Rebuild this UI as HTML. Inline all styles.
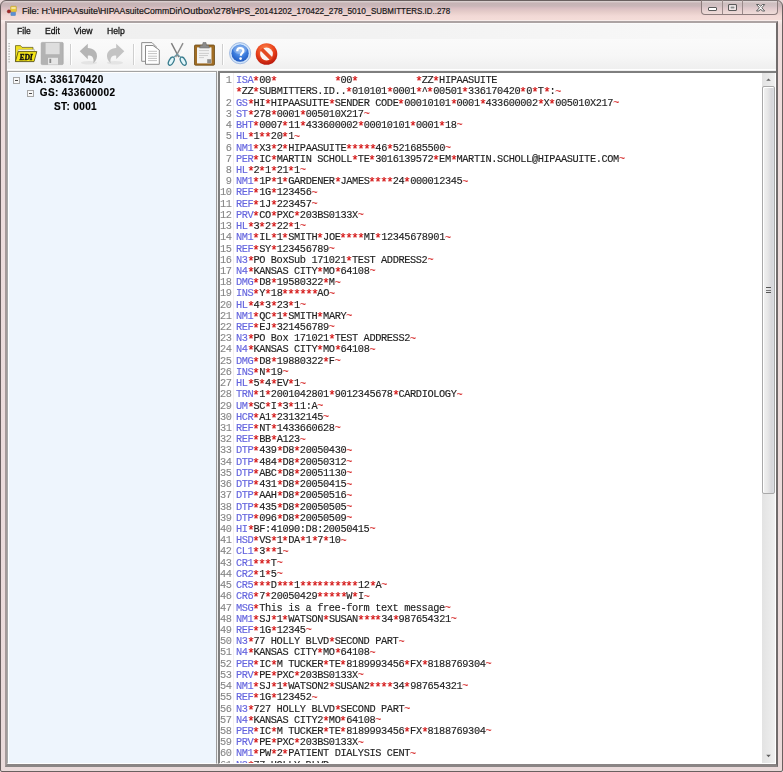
<!DOCTYPE html>
<html><head><meta charset="utf-8">
<style>
*{margin:0;padding:0;box-sizing:border-box}
html,body{width:783px;height:772px;overflow:hidden;background:#e8d8d8}
body{position:relative;font-family:"Liberation Sans",sans-serif}
.abs{position:absolute}
#win{left:0;top:0;width:783px;height:772px;background:linear-gradient(#dcd2d2 0,#d6caca 1px,#c6b3b5 2px,#c9b6b8 5px,#d9bec2 7px,#e6cdca 11px,#f2d9d6 15px,#f4dcd8 18.5px,#f8ecea 19.5px,#efdedd 24px,#ecdcdc 200px,#eadada);border:1px solid #6a6060;border-radius:6px 6px 2px 2px}
#title{left:21.5px;top:4.7px;font-size:9.6px;color:#151515;-webkit-text-stroke:0.2px;white-space:pre}
#title span{position:absolute;top:0;transform-origin:0 0}
#caps{left:701px;top:0px;width:77px;height:15px;border:1px solid #8c7c7c;border-top:none;border-radius:0 0 4px 4px;background:linear-gradient(rgba(255,255,255,0.12),rgba(255,255,255,0.2))}
#client{left:5px;top:21px;width:773px;height:746px;background:#f0f0f0;border-left:2px solid #a49a9a;border-top:2px solid #aca3a3;border-right:2px solid #716c6c;border-bottom:3px solid #8a8585}
#menu{will-change:transform;left:7px;top:23px;width:769px;height:16px;background:linear-gradient(90deg,#efefef,#f1f1f1 40%,#f9f9f9);border-top:1px solid #fbfbfb}
.mi{position:absolute;top:1px;font-size:9.6px;color:#111;-webkit-text-stroke:0.3px;transform-origin:0 0;transform:scaleX(0.9)}
#tool{left:7px;top:39px;width:769px;height:31px;background:linear-gradient(#fafafa,#f7f7f7 55%,#efefef);border-bottom:1px solid #fff}
#tree{will-change:transform;left:7px;top:71px;width:210px;height:693px;background:#eef5fd;border-top:1px solid #a3a3a3;border-right:1px solid #9a9a9a;border-bottom:1px solid #fff;border-left:1px solid #a6a9a9;box-shadow:inset 1px 1px 0 #fff}
.tn{position:absolute;font-size:10px;font-weight:bold;color:#000;-webkit-text-stroke:0.15px;white-space:pre;letter-spacing:0.38px}
.bx{position:absolute;width:7px;height:7px;border:1px solid #a6a6a6;background:#f8f8f8}
.bx::after{content:"";position:absolute;left:1px;top:2px;width:3px;height:1px;background:#4a4a4a}
#ed{left:218px;top:71px;width:558px;height:693px;background:#fff;border-left:2px solid #7f7f7f;border-top:2px solid #7f7f7f;border-bottom:1px solid #fff}
#sb{left:762px;top:73px;width:13px;height:690px;background:linear-gradient(90deg,#e3e3e3,#eaeaea 60%,#f0f0f0)}
#sbw{left:775px;top:73px;width:1px;height:691px;background:#fff}
#thumb{left:762px;top:86px;width:13px;height:408px;border:1px solid #a9a9a9;border-radius:2px;background:linear-gradient(90deg,#f2f2f2,#e8e8e8 40%,#d6d6da 80%,#dcdfe3);box-shadow:inset 1px 1px 0 #fff}
#grip{left:766px;top:287px;width:5px;height:6px;border-top:1px solid #555;border-bottom:1px solid #555}
#grip::after{content:"";position:absolute;left:0;top:1.5px;width:5px;height:1px;background:#777}
#code{left:220px;top:73px;width:542px;height:690px;overflow:hidden;will-change:transform}
.row{position:absolute;left:0;width:542px;height:12px;white-space:pre;font-family:"Liberation Mono",monospace;font-size:10.3px;letter-spacing:-0.38px;color:#222;-webkit-text-stroke:0.14px}
.ln{position:absolute;right:530.5px;color:#858585;text-align:right;-webkit-text-stroke:0.1px}
.tx{position:absolute;left:16px}
.s{color:#6464de}
.d{color:#d83838;position:relative;top:0.4px}
.a{color:#d00000;display:inline-block;transform:translateY(1.2px) scale(1.22)}
#gut{left:233px;top:73px;width:1px;height:690px;background:#f3eeee}
</style></head><body>
<div id="win" class="abs"></div>
<svg class="abs" style="left:6px;top:5px" width="13" height="13" viewBox="6 5 13 13">
 <rect x="10.6" y="6.2" width="5.8" height="5.6" rx="0.8" fill="#e8c838" stroke="#b89828" stroke-width="0.5"/>
 <rect x="11.4" y="7" width="4.2" height="2" fill="#f6e49a"/>
 <rect x="10.9" y="12.3" width="4.6" height="3.3" fill="#5a90d4" stroke="#4a78b0" stroke-width="0.4"/>
 <circle cx="8.9" cy="11.4" r="1.7" fill="#a02828" stroke="#802020" stroke-width="0.4"/>
</svg>
<div id="title" class="abs">
 <span style="left:0px;transform:scaleX(0.933)">File: H:\HIPAAsuite\</span>
 <span style="left:78.4px;transform:scaleX(0.904)">HIPAAsuiteCommDir\</span>
 <span style="left:161.2px;transform:scaleX(0.968)">Outbox\278\</span>
 <span style="left:211.6px;transform:scaleX(0.868)">HPS_20141202_170422_278_5010_</span>
 <span style="left:349.3px;transform:scaleX(0.83)">SUBMITTERS.ID..278</span>
</div>
<div id="caps" class="abs"></div>
<svg class="abs" style="left:701px;top:0" width="78" height="16" viewBox="0 0 78 16">
 <line x1="21.5" y1="0" x2="21.5" y2="14" stroke="#9a8a8a" stroke-width="1"/>
 <line x1="41.5" y1="0" x2="41.5" y2="14" stroke="#9a8a8a" stroke-width="1"/>
 <rect x="7.5" y="7.5" width="8" height="3" rx="0.5" fill="#fff" stroke="#5a5a5a" stroke-width="1"/>
 <rect x="27.5" y="4.5" width="8" height="6" rx="0.5" fill="none" stroke="#5a5a5a" stroke-width="1"/>
 <rect x="29" y="6" width="5" height="3" fill="#8a8a8a" stroke="#fff" stroke-width="1"/>
  <path d="M55.5,4.5 L57.9,4.5 L59.6,6.4 L61.3,4.5 L63.7,4.5 L60.8,7.75 L63.7,11 L61.3,11 L59.6,9.1 L57.9,11 L55.5,11 L58.4,7.75 Z" fill="#fff" stroke="#5e5e5e" stroke-width="1" stroke-linejoin="round"/>
</svg>
<div id="client" class="abs"></div>
<div id="menu" class="abs">
 <span class="mi" style="left:10.3px">File</span>
 <span class="mi" style="left:37.6px">Edit</span>
 <span class="mi" style="left:66.6px">View</span>
 <span class="mi" style="left:99.6px">Help</span>
</div>
<div id="tool" class="abs"></div>
<svg class="abs" style="left:0;top:38px" width="290" height="32" viewBox="0 38 290 32">
 <defs>
  <radialGradient id="hb" cx="0.5" cy="0.35" r="0.7"><stop offset="0" stop-color="#8cb8f0"/><stop offset="0.5" stop-color="#3d7fe0"/><stop offset="1" stop-color="#1c52b8"/></radialGradient>
  <radialGradient id="rb" cx="0.45" cy="0.3" r="0.75"><stop offset="0" stop-color="#ff8a50"/><stop offset="0.55" stop-color="#e8401a"/><stop offset="1" stop-color="#b01008"/></radialGradient>
 </defs>
 <!-- grip -->
 <g fill="#a0a0a0"><rect x="8.5" y="43" width="1.2" height="1.2"/><rect x="8.5" y="45.6" width="1.2" height="1.2"/><rect x="8.5" y="48.2" width="1.2" height="1.2"/><rect x="8.5" y="50.8" width="1.2" height="1.2"/><rect x="8.5" y="53.4" width="1.2" height="1.2"/><rect x="8.5" y="56" width="1.2" height="1.2"/><rect x="8.5" y="58.6" width="1.2" height="1.2"/><rect x="8.5" y="61.2" width="1.2" height="1.2"/></g>
 <!-- folder EDI -->
 <path d="M15.5,61.5 L15.5,45.6 L20.5,45.6 L22,47.4 L33,47.4 L33,52 Z" fill="#f0e020" stroke="#6a6420" stroke-width="0.8"/>
 <path d="M17.5,51.8 L18.5,49.6 L34.5,49.6 L34,51.8 Z" fill="#fafaf0" stroke="#9a9a80" stroke-width="0.5"/>
 <path d="M18.2,51.6 L36.8,51.6 L34,61.6 L15.4,61.6 Z" fill="#f8e818" stroke="#5a5418" stroke-width="0.9"/>
 <text x="19.4" y="59.5" font-family="Liberation Serif" font-weight="bold" font-style="italic" font-size="8.3" fill="#111" stroke="#111" stroke-width="0.45" textLength="13.4" lengthAdjust="spacingAndGlyphs">EDI</text>
 <!-- save -->
 <rect x="41.2" y="42.4" width="22" height="22.2" rx="1" fill="#b3b3b3" stroke="#a0a0a0" stroke-width="0.6"/>
 <rect x="45.6" y="43" width="14" height="11.2" fill="#dedede"/>
 <rect x="48" y="57.8" width="10" height="6.8" fill="#e6e6e6"/>
 <rect x="49.4" y="58.8" width="1.8" height="4.2" fill="#8a8a8a"/>
 <!-- sep -->
 <rect x="70" y="44" width="1" height="21" fill="#cfcfcf"/><rect x="71" y="44" width="1" height="21" fill="#fff"/>
 <!-- undo -->
 <ellipse cx="89" cy="62.8" rx="8" ry="1.8" fill="#e4e4e4"/>
 <path d="M79.7,51.2 L87.8,43.8 L87.8,48 C93.5,48 97.2,51.6 97,56.5 C96.8,59.5 95,62 93.2,63.2 C94.2,60 93.2,55.2 88.6,55.6 L87.8,55.8 L87.8,59.2 Z" fill="#b5b5b5"/>
 <!-- redo -->
 <ellipse cx="115" cy="62.8" rx="8" ry="1.8" fill="#e4e4e4"/>
 <path d="M124.3,51.2 L116.2,43.8 L116.2,48 C110.5,48 106.8,51.6 107,56.5 C107.2,59.5 109,62 110.8,63.2 C109.8,60 110.8,55.2 115.4,55.6 L116.2,55.8 L116.2,59.2 Z" fill="#c3c3c3"/>
 <!-- sep -->
 <rect x="133" y="44" width="1" height="21" fill="#cfcfcf"/><rect x="134" y="44" width="1" height="21" fill="#fff"/>
 <!-- copy -->
 <path d="M141.7,42.6 L152,42.6 L156,46.6 L156,61.3 L141.7,61.3 Z" fill="#fafafa" stroke="#8e8e8e" stroke-width="1"/>
 <path d="M145.5,45.5 L153,45.5 L159.3,50 L159.3,64.3 L145.5,64.3 Z" fill="#fff" stroke="#8a8a8a" stroke-width="1"/>
 <g stroke="#b4b4b4" stroke-width="0.8"><line x1="148" y1="51.3" x2="157" y2="51.3"/><line x1="148" y1="53.6" x2="157" y2="53.6"/><line x1="148" y1="56.2" x2="157" y2="56.2"/><line x1="148" y1="58.4" x2="157" y2="58.4"/><line x1="148" y1="60.6" x2="157" y2="60.6"/></g>
 <!-- scissors -->
 <path d="M171.4,43.2 L178.8,57.2" stroke="#7c7c7c" stroke-width="1.4"/>
 <path d="M183,43.2 L175.6,57.2" stroke="#8c8c8c" stroke-width="1.4"/>
 <path d="M177.2,54.2 L173.2,57.6 M177.2,54.2 L181.2,57.6" stroke="#6a9aa8" stroke-width="1.1"/>
 <ellipse cx="171.3" cy="61.2" rx="2.3" ry="4.5" transform="rotate(28 171.3 61.2)" fill="#e2f6fb" stroke="#3a7d8e" stroke-width="1.3"/>
 <ellipse cx="183.2" cy="61.2" rx="2.3" ry="4.5" transform="rotate(-28 183.2 61.2)" fill="#e2f6fb" stroke="#3a7d8e" stroke-width="1.3"/>
 <!-- clipboard -->
 <rect x="194.5" y="45" width="20" height="20.2" rx="1" fill="#a06c22" stroke="#6a4a18" stroke-width="0.8"/>
 <rect x="197" y="47.4" width="14.5" height="16" fill="#f2f2f2"/>
 <path d="M199.5,48 L200.5,45.2 L202.5,45.2 L203,42.5 L206,42.5 L206.5,45.2 L208.5,45.2 L209.5,48 Z" fill="#8a8a8a" stroke="#666" stroke-width="0.5"/>
 <g stroke="#c4c4c4" stroke-width="0.8"><line x1="199" y1="50.6" x2="209" y2="50.6"/><line x1="199" y1="53.4" x2="209" y2="53.4"/><line x1="199" y1="55.5" x2="208" y2="55.5"/><line x1="199" y1="57.6" x2="204" y2="57.6"/></g>
 <rect x="207.2" y="59.2" width="4" height="4" fill="#8d8d8d"/>
 <!-- sep -->
 <rect x="222" y="44" width="1" height="21" fill="#cfcfcf"/><rect x="223" y="44" width="1" height="21" fill="#fff"/>
 <!-- help -->
 <circle cx="240.1" cy="53.2" r="10.6" fill="#d0e4fa" stroke="#8aa8d8" stroke-width="0.7"/>
 <circle cx="240.1" cy="53.2" r="8.6" fill="url(#hb)"/>
 <ellipse cx="240.1" cy="49.6" rx="7" ry="4.6" fill="#fff" opacity="0.22"/>
 <path d="M237.2,51.2 C237.2,48.8 238.6,48 240,48 C242.2,48 243.4,49.4 243.4,50.8 C243.4,53 240.8,53.2 240.8,55.8" fill="none" stroke="#fff" stroke-width="2.2"/>
 <circle cx="240.6" cy="58.6" r="1.3" fill="#fff"/>
 <!-- stop -->
 <circle cx="266.5" cy="54" r="10.8" fill="url(#rb)"/>
 <circle cx="266.5" cy="54" r="6.4" fill="#fbf4f2"/>
 <path d="M261.5,49 L271.5,59" stroke="#e34a22" stroke-width="3.8"/>
</svg>
<div id="tree" class="abs">
 <div class="bx" style="left:5px;top:5px"></div>
 <span class="tn" style="left:17.5px;top:2px">ISA: 336170420</span>
 <div class="bx" style="left:19px;top:18px"></div>
 <span class="tn" style="left:31.8px;top:15px">GS: 433600002</span>
 <span class="tn" style="left:46px;top:28.5px">ST: 0001</span>
</div>
<div id="ed" class="abs"></div>
<div id="gut" class="abs"></div>
<div id="sb" class="abs"></div>
<div id="sbw" class="abs"></div>
<div id="thumb" class="abs"></div>
<div id="grip" class="abs"></div>
<svg class="abs" style="left:762px;top:73px" width="13" height="14"><path d="M4.2,7.8 L6.5,5.4 L8.8,7.8 Z" fill="#606060"/></svg>
<svg class="abs" style="left:762px;top:749px" width="13" height="14"><path d="M4.2,5.8 L6.5,8.2 L8.8,5.8 Z" fill="#606060"/></svg>
<div id="code" class="abs">
<div class="row" style="top:1.20px"><span class="ln">1</span><span class="tx"><span class="s">ISA</span><span class="a">*</span>00<span class="a">*</span>          <span class="a">*</span>00<span class="a">*</span>          <span class="a">*</span>ZZ<span class="a">*</span>HIPAASUITE     </span></div>
<div class="row" style="top:12.42px"><span class="ln"></span><span class="tx"><span class="a">*</span>ZZ<span class="a">*</span>SUBMITTERS.ID..<span class="a">*</span>010101<span class="a">*</span>0001<span class="a">*</span>^<span class="a">*</span>00501<span class="a">*</span>336170420<span class="a">*</span>0<span class="a">*</span>T<span class="a">*</span>:<span class="d">~</span></span></div>
<div class="row" style="top:23.64px"><span class="ln">2</span><span class="tx"><span class="s">GS</span><span class="a">*</span>HI<span class="a">*</span>HIPAASUITE<span class="a">*</span>SENDER CODE<span class="a">*</span>00010101<span class="a">*</span>0001<span class="a">*</span>433600002<span class="a">*</span>X<span class="a">*</span>005010X217<span class="d">~</span></span></div>
<div class="row" style="top:34.86px"><span class="ln">3</span><span class="tx"><span class="s">ST</span><span class="a">*</span>278<span class="a">*</span>0001<span class="a">*</span>005010X217<span class="d">~</span></span></div>
<div class="row" style="top:46.08px"><span class="ln">4</span><span class="tx"><span class="s">BHT</span><span class="a">*</span>0007<span class="a">*</span>11<span class="a">*</span>433600002<span class="a">*</span>00010101<span class="a">*</span>0001<span class="a">*</span>18<span class="d">~</span></span></div>
<div class="row" style="top:57.30px"><span class="ln">5</span><span class="tx"><span class="s">HL</span><span class="a">*</span>1<span class="a">*</span><span class="a">*</span>20<span class="a">*</span>1<span class="d">~</span></span></div>
<div class="row" style="top:68.52px"><span class="ln">6</span><span class="tx"><span class="s">NM1</span><span class="a">*</span>X3<span class="a">*</span>2<span class="a">*</span>HIPAASUITE<span class="a">*</span><span class="a">*</span><span class="a">*</span><span class="a">*</span><span class="a">*</span>46<span class="a">*</span>521685500<span class="d">~</span></span></div>
<div class="row" style="top:79.74px"><span class="ln">7</span><span class="tx"><span class="s">PER</span><span class="a">*</span>IC<span class="a">*</span>MARTIN SCHOLL<span class="a">*</span>TE<span class="a">*</span>3016139572<span class="a">*</span>EM<span class="a">*</span>MARTIN.SCHOLL@HIPAASUITE.COM<span class="d">~</span></span></div>
<div class="row" style="top:90.96px"><span class="ln">8</span><span class="tx"><span class="s">HL</span><span class="a">*</span>2<span class="a">*</span>1<span class="a">*</span>21<span class="a">*</span>1<span class="d">~</span></span></div>
<div class="row" style="top:102.18px"><span class="ln">9</span><span class="tx"><span class="s">NM1</span><span class="a">*</span>1P<span class="a">*</span>1<span class="a">*</span>GARDENER<span class="a">*</span>JAMES<span class="a">*</span><span class="a">*</span><span class="a">*</span><span class="a">*</span>24<span class="a">*</span>000012345<span class="d">~</span></span></div>
<div class="row" style="top:113.40px"><span class="ln">10</span><span class="tx"><span class="s">REF</span><span class="a">*</span>1G<span class="a">*</span>123456<span class="d">~</span></span></div>
<div class="row" style="top:124.62px"><span class="ln">11</span><span class="tx"><span class="s">REF</span><span class="a">*</span>1J<span class="a">*</span>223457<span class="d">~</span></span></div>
<div class="row" style="top:135.84px"><span class="ln">12</span><span class="tx"><span class="s">PRV</span><span class="a">*</span>CO<span class="a">*</span>PXC<span class="a">*</span>203BS0133X<span class="d">~</span></span></div>
<div class="row" style="top:147.06px"><span class="ln">13</span><span class="tx"><span class="s">HL</span><span class="a">*</span>3<span class="a">*</span>2<span class="a">*</span>22<span class="a">*</span>1<span class="d">~</span></span></div>
<div class="row" style="top:158.28px"><span class="ln">14</span><span class="tx"><span class="s">NM1</span><span class="a">*</span>IL<span class="a">*</span>1<span class="a">*</span>SMITH<span class="a">*</span>JOE<span class="a">*</span><span class="a">*</span><span class="a">*</span><span class="a">*</span>MI<span class="a">*</span>12345678901<span class="d">~</span></span></div>
<div class="row" style="top:169.50px"><span class="ln">15</span><span class="tx"><span class="s">REF</span><span class="a">*</span>SY<span class="a">*</span>123456789<span class="d">~</span></span></div>
<div class="row" style="top:180.72px"><span class="ln">16</span><span class="tx"><span class="s">N3</span><span class="a">*</span>PO BoxSub 171021<span class="a">*</span>TEST ADDRESS2<span class="d">~</span></span></div>
<div class="row" style="top:191.94px"><span class="ln">17</span><span class="tx"><span class="s">N4</span><span class="a">*</span>KANSAS CITY<span class="a">*</span>MO<span class="a">*</span>64108<span class="d">~</span></span></div>
<div class="row" style="top:203.16px"><span class="ln">18</span><span class="tx"><span class="s">DMG</span><span class="a">*</span>D8<span class="a">*</span>19580322<span class="a">*</span>M<span class="d">~</span></span></div>
<div class="row" style="top:214.38px"><span class="ln">19</span><span class="tx"><span class="s">INS</span><span class="a">*</span>Y<span class="a">*</span>18<span class="a">*</span><span class="a">*</span><span class="a">*</span><span class="a">*</span><span class="a">*</span><span class="a">*</span>AO<span class="d">~</span></span></div>
<div class="row" style="top:225.60px"><span class="ln">20</span><span class="tx"><span class="s">HL</span><span class="a">*</span>4<span class="a">*</span>3<span class="a">*</span>23<span class="a">*</span>1<span class="d">~</span></span></div>
<div class="row" style="top:236.82px"><span class="ln">21</span><span class="tx"><span class="s">NM1</span><span class="a">*</span>QC<span class="a">*</span>1<span class="a">*</span>SMITH<span class="a">*</span>MARY<span class="d">~</span></span></div>
<div class="row" style="top:248.04px"><span class="ln">22</span><span class="tx"><span class="s">REF</span><span class="a">*</span>EJ<span class="a">*</span>321456789<span class="d">~</span></span></div>
<div class="row" style="top:259.26px"><span class="ln">23</span><span class="tx"><span class="s">N3</span><span class="a">*</span>PO Box 171021<span class="a">*</span>TEST ADDRESS2<span class="d">~</span></span></div>
<div class="row" style="top:270.48px"><span class="ln">24</span><span class="tx"><span class="s">N4</span><span class="a">*</span>KANSAS CITY<span class="a">*</span>MO<span class="a">*</span>64108<span class="d">~</span></span></div>
<div class="row" style="top:281.70px"><span class="ln">25</span><span class="tx"><span class="s">DMG</span><span class="a">*</span>D8<span class="a">*</span>19880322<span class="a">*</span>F<span class="d">~</span></span></div>
<div class="row" style="top:292.92px"><span class="ln">26</span><span class="tx"><span class="s">INS</span><span class="a">*</span>N<span class="a">*</span>19<span class="d">~</span></span></div>
<div class="row" style="top:304.14px"><span class="ln">27</span><span class="tx"><span class="s">HL</span><span class="a">*</span>5<span class="a">*</span>4<span class="a">*</span>EV<span class="a">*</span>1<span class="d">~</span></span></div>
<div class="row" style="top:315.36px"><span class="ln">28</span><span class="tx"><span class="s">TRN</span><span class="a">*</span>1<span class="a">*</span>2001042801<span class="a">*</span>9012345678<span class="a">*</span>CARDIOLOGY<span class="d">~</span></span></div>
<div class="row" style="top:326.58px"><span class="ln">29</span><span class="tx"><span class="s">UM</span><span class="a">*</span>SC<span class="a">*</span>I<span class="a">*</span>3<span class="a">*</span>11:A<span class="d">~</span></span></div>
<div class="row" style="top:337.80px"><span class="ln">30</span><span class="tx"><span class="s">HCR</span><span class="a">*</span>A1<span class="a">*</span>23132145<span class="d">~</span></span></div>
<div class="row" style="top:349.02px"><span class="ln">31</span><span class="tx"><span class="s">REF</span><span class="a">*</span>NT<span class="a">*</span>1433660628<span class="d">~</span></span></div>
<div class="row" style="top:360.24px"><span class="ln">32</span><span class="tx"><span class="s">REF</span><span class="a">*</span>BB<span class="a">*</span>A123<span class="d">~</span></span></div>
<div class="row" style="top:371.46px"><span class="ln">33</span><span class="tx"><span class="s">DTP</span><span class="a">*</span>439<span class="a">*</span>D8<span class="a">*</span>20050430<span class="d">~</span></span></div>
<div class="row" style="top:382.68px"><span class="ln">34</span><span class="tx"><span class="s">DTP</span><span class="a">*</span>484<span class="a">*</span>D8<span class="a">*</span>20050312<span class="d">~</span></span></div>
<div class="row" style="top:393.90px"><span class="ln">35</span><span class="tx"><span class="s">DTP</span><span class="a">*</span>ABC<span class="a">*</span>D8<span class="a">*</span>20051130<span class="d">~</span></span></div>
<div class="row" style="top:405.12px"><span class="ln">36</span><span class="tx"><span class="s">DTP</span><span class="a">*</span>431<span class="a">*</span>D8<span class="a">*</span>20050415<span class="d">~</span></span></div>
<div class="row" style="top:416.34px"><span class="ln">37</span><span class="tx"><span class="s">DTP</span><span class="a">*</span>AAH<span class="a">*</span>D8<span class="a">*</span>20050516<span class="d">~</span></span></div>
<div class="row" style="top:427.56px"><span class="ln">38</span><span class="tx"><span class="s">DTP</span><span class="a">*</span>435<span class="a">*</span>D8<span class="a">*</span>20050505<span class="d">~</span></span></div>
<div class="row" style="top:438.78px"><span class="ln">39</span><span class="tx"><span class="s">DTP</span><span class="a">*</span>096<span class="a">*</span>D8<span class="a">*</span>20050509<span class="d">~</span></span></div>
<div class="row" style="top:450.00px"><span class="ln">40</span><span class="tx"><span class="s">HI</span><span class="a">*</span>BF:41090:D8:20050415<span class="d">~</span></span></div>
<div class="row" style="top:461.22px"><span class="ln">41</span><span class="tx"><span class="s">HSD</span><span class="a">*</span>VS<span class="a">*</span>1<span class="a">*</span>DA<span class="a">*</span>1<span class="a">*</span>7<span class="a">*</span>10<span class="d">~</span></span></div>
<div class="row" style="top:472.44px"><span class="ln">42</span><span class="tx"><span class="s">CL1</span><span class="a">*</span>3<span class="a">*</span><span class="a">*</span>1<span class="d">~</span></span></div>
<div class="row" style="top:483.66px"><span class="ln">43</span><span class="tx"><span class="s">CR1</span><span class="a">*</span><span class="a">*</span><span class="a">*</span>T<span class="d">~</span></span></div>
<div class="row" style="top:494.88px"><span class="ln">44</span><span class="tx"><span class="s">CR2</span><span class="a">*</span>1<span class="a">*</span>5<span class="d">~</span></span></div>
<div class="row" style="top:506.10px"><span class="ln">45</span><span class="tx"><span class="s">CR5</span><span class="a">*</span><span class="a">*</span><span class="a">*</span>D<span class="a">*</span><span class="a">*</span><span class="a">*</span>1<span class="a">*</span><span class="a">*</span><span class="a">*</span><span class="a">*</span><span class="a">*</span><span class="a">*</span><span class="a">*</span><span class="a">*</span><span class="a">*</span><span class="a">*</span>12<span class="a">*</span>A<span class="d">~</span></span></div>
<div class="row" style="top:517.32px"><span class="ln">46</span><span class="tx"><span class="s">CR6</span><span class="a">*</span>7<span class="a">*</span>20050429<span class="a">*</span><span class="a">*</span><span class="a">*</span><span class="a">*</span><span class="a">*</span>W<span class="a">*</span>I<span class="d">~</span></span></div>
<div class="row" style="top:528.54px"><span class="ln">47</span><span class="tx"><span class="s">MSG</span><span class="a">*</span>This is a free-form text message<span class="d">~</span></span></div>
<div class="row" style="top:539.76px"><span class="ln">48</span><span class="tx"><span class="s">NM1</span><span class="a">*</span>SJ<span class="a">*</span>1<span class="a">*</span>WATSON<span class="a">*</span>SUSAN<span class="a">*</span><span class="a">*</span><span class="a">*</span><span class="a">*</span>34<span class="a">*</span>987654321<span class="d">~</span></span></div>
<div class="row" style="top:550.98px"><span class="ln">49</span><span class="tx"><span class="s">REF</span><span class="a">*</span>1G<span class="a">*</span>12345<span class="d">~</span></span></div>
<div class="row" style="top:562.20px"><span class="ln">50</span><span class="tx"><span class="s">N3</span><span class="a">*</span>77 HOLLY BLVD<span class="a">*</span>SECOND PART<span class="d">~</span></span></div>
<div class="row" style="top:573.42px"><span class="ln">51</span><span class="tx"><span class="s">N4</span><span class="a">*</span>KANSAS CITY<span class="a">*</span>MO<span class="a">*</span>64108<span class="d">~</span></span></div>
<div class="row" style="top:584.64px"><span class="ln">52</span><span class="tx"><span class="s">PER</span><span class="a">*</span>IC<span class="a">*</span>M TUCKER<span class="a">*</span>TE<span class="a">*</span>8189993456<span class="a">*</span>FX<span class="a">*</span>8188769304<span class="d">~</span></span></div>
<div class="row" style="top:595.86px"><span class="ln">53</span><span class="tx"><span class="s">PRV</span><span class="a">*</span>PE<span class="a">*</span>PXC<span class="a">*</span>203BS0133X<span class="d">~</span></span></div>
<div class="row" style="top:607.08px"><span class="ln">54</span><span class="tx"><span class="s">NM1</span><span class="a">*</span>SJ<span class="a">*</span>1<span class="a">*</span>WATSON2<span class="a">*</span>SUSAN2<span class="a">*</span><span class="a">*</span><span class="a">*</span><span class="a">*</span>34<span class="a">*</span>987654321<span class="d">~</span></span></div>
<div class="row" style="top:618.30px"><span class="ln">55</span><span class="tx"><span class="s">REF</span><span class="a">*</span>1G<span class="a">*</span>123452<span class="d">~</span></span></div>
<div class="row" style="top:629.52px"><span class="ln">56</span><span class="tx"><span class="s">N3</span><span class="a">*</span>727 HOLLY BLVD<span class="a">*</span>SECOND PART<span class="d">~</span></span></div>
<div class="row" style="top:640.74px"><span class="ln">57</span><span class="tx"><span class="s">N4</span><span class="a">*</span>KANSAS CITY2<span class="a">*</span>MO<span class="a">*</span>64108<span class="d">~</span></span></div>
<div class="row" style="top:651.96px"><span class="ln">58</span><span class="tx"><span class="s">PER</span><span class="a">*</span>IC<span class="a">*</span>M TUCKER<span class="a">*</span>TE<span class="a">*</span>8189993456<span class="a">*</span>FX<span class="a">*</span>8188769304<span class="d">~</span></span></div>
<div class="row" style="top:663.18px"><span class="ln">59</span><span class="tx"><span class="s">PRV</span><span class="a">*</span>PE<span class="a">*</span>PXC<span class="a">*</span>203BS0133X<span class="d">~</span></span></div>
<div class="row" style="top:674.40px"><span class="ln">60</span><span class="tx"><span class="s">NM1</span><span class="a">*</span>PW<span class="a">*</span>2<span class="a">*</span>PATIENT DIALYSIS CENT<span class="d">~</span></span></div>
<div class="row" style="top:685.62px"><span class="ln">61</span><span class="tx"><span class="s">N3</span><span class="a">*</span>77 HOLLY BLVD</span></div>
</div>
</body></html>
